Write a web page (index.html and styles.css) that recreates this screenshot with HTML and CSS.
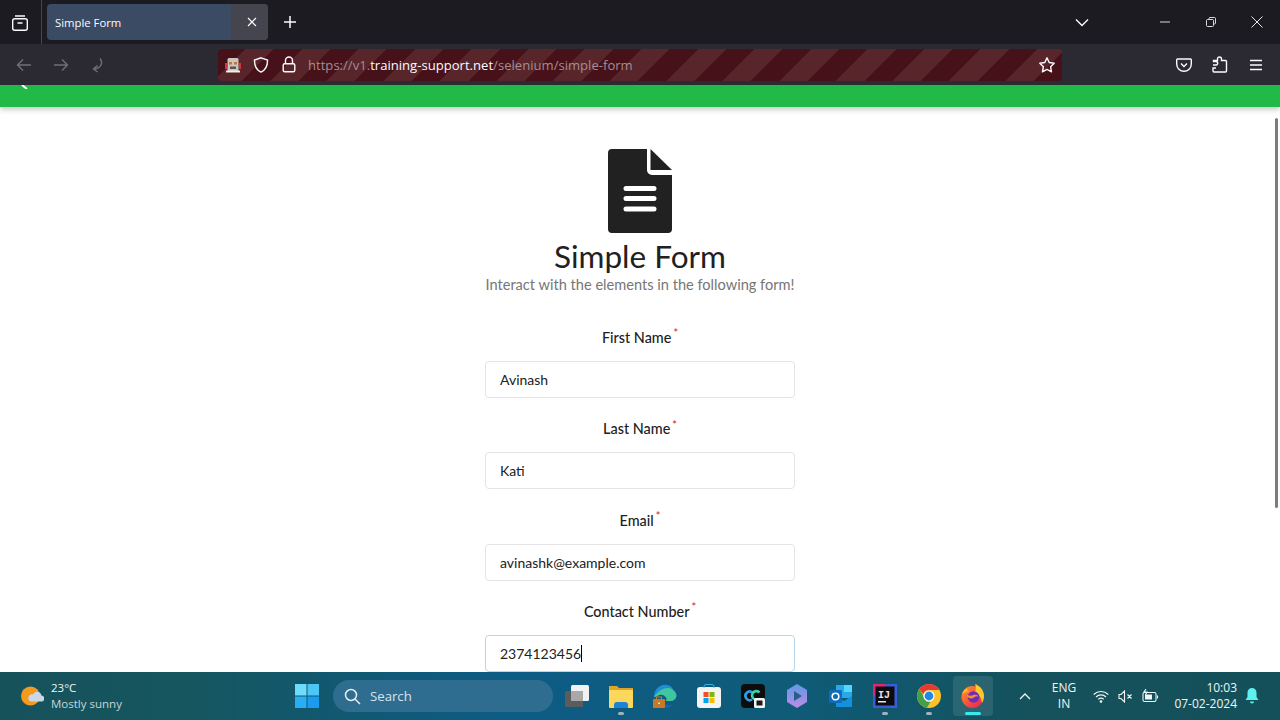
FILE: index.html
```html
<!DOCTYPE html>
<html lang="en">
<head>
  <meta charset="UTF-8">
  <title>Simple Form</title>
  <link rel="stylesheet" href="styles.css">
</head>
<body>
  <!-- browser tabs -->
  <div class="tabbar">
    <div class="tab-left">
      <svg class="ico" width="20" height="20" viewBox="0 0 20 20" fill="none" stroke="#fbfbfe" stroke-width="1.4"><rect x="2.700" y="5.700" width="14.600" height="11.600" rx="2"/><path d="M5 3h10M7.500 10h5"/></svg>
    </div>
    <div class="tab">
      <span class="tab-title">Simple Form</span>
      <span class="tab-close"><svg width="10" height="10" viewBox="0 0 10 10" stroke="#fbfbfe" stroke-width="1.2"><path d="M1 1l8 8M9 1l-8 8"/></svg></span>
    </div>
    <svg class="tab-plus" width="14" height="14" viewBox="0 0 14 14" stroke="#fbfbfe" stroke-width="1.5"><path d="M7 1v12M1 7h12"/></svg>
    <div class="tab-right">
      <svg class="tab-list" width="14" height="9" viewBox="0 0 14 9" fill="none" stroke="#fbfbfe" stroke-width="1.4"><path d="M1 1.500l6 6 6-6"/></svg>
      <div class="win-btn"><svg width="12" height="12" viewBox="0 0 12 12" stroke="#d8d8dc"><path d="M1 6h10"/></svg></div>
      <div class="win-btn"><svg width="12" height="12" viewBox="0 0 12 12" fill="none" stroke="#d8d8dc"><rect x="1.500" y="3.500" width="7" height="7" rx="1"/><path d="M4 3.500V2.500a1 1 0 0 1 1-1h4.500a1 1 0 0 1 1 1V7a1 1 0 0 1-1 1H8.500"/></svg></div>
      <div class="win-btn"><svg width="12" height="12" viewBox="0 0 12 12" stroke="#e8e8ea"><path d="M.5.500l11 11M11.500.500l-11 11"/></svg></div>
    </div>
  </div>

  <!-- address bar -->
  <div class="navbar">
    <div class="nav-btns">
      <svg width="16" height="14" viewBox="0 0 16 14" fill="none" stroke="#6f6f76" stroke-width="1.400"><path d="M15 7H1.500M7 1.500L1.500 7 7 12.500"/></svg>
      <svg width="16" height="14" viewBox="0 0 16 14" fill="none" stroke="#6f6f76" stroke-width="1.400"><path d="M1 7h13.500M9 1.500L14.500 7 9 12.500"/></svg>
      <svg width="14" height="16" viewBox="0 0 14 16" fill="none" stroke="#6f6f76" stroke-width="1.400"><path d="M10 1.500c3 3.500 2 9.500-6 10.500M7.500 8.500L3.500 12l4 3"/></svg>
    </div>
    <div class="urlbar">
      <svg class="url-robot" width="16" height="16" viewBox="0 0 16 16"><rect x="0" y="6" width="2" height="6" fill="#d0353f"/><rect x="14" y="6" width="2" height="6" fill="#d0353f"/><path d="M2.500 2.500Q2.500 1 4 1h8q1.500 0 1.500 1.500V14h-11z" fill="#c9c6c0"/><rect x="4" y="5" width="3" height="2.500" fill="#d0722c"/><rect x="9" y="5" width="3" height="2.500" fill="#d0722c"/><rect x="5" y="9.500" width="6" height="2.500" fill="#5a5654"/><rect x="1" y="13.500" width="14" height="2" rx=".5" fill="#f0eee8"/></svg>
      <svg width="18" height="18" viewBox="0 0 18 18" fill="none" stroke="#fbfbfe" stroke-width="1.400"><path d="M9 1.800l6.500 2.200c.2 5.500-1.500 9.800-6.500 12.200C4 13.800 2.300 9.500 2.500 4z"/></svg>
      <svg class="url-lock" width="14" height="17" viewBox="0 0 14 17" fill="none" stroke="#fbfbfe" stroke-width="1.400"><rect x="1.200" y="7.700" width="11.600" height="8" rx="1.500"/><path d="M3.500 7.500V4.500a3.500 3.500 0 0 1 7 0v3"/></svg>
      <span class="url-text">https://v1.<b>training-support.net</b>/selenium/simple-form</span>
      <svg class="url-star" width="18" height="18" viewBox="0 0 18 18" fill="none" stroke="#fbfbfe" stroke-width="1.400" stroke-linejoin="round"><path d="M9 1.800l2.200 4.700 5 .7-3.600 3.500.9 5.100L9 13.400l-4.500 2.400.9-5.100L1.800 7.200l5-.7z"/></svg>
    </div>
    <div class="nav-right">
      <svg width="16" height="14" viewBox="0 0 16 14" fill="none" stroke="#fbfbfe" stroke-width="1.400"><path d="M1.500 1h13a.8.8 0 0 1 .8.800V6a7.300 7.300 0 0 1-14.600 0V1.800a.8.8 0 0 1 .8-.8z"/><path d="M5 5.500l3 3 3-3"/></svg>
      <svg width="16" height="17" viewBox="0 0 16 17" fill="none" stroke="#fbfbfe" stroke-width="1.400"><path d="M1 9h2.500a1.800 1.800 0 1 0 0-3.500H1.500V4.500h4V3a2 2 0 0 1 4 0v1.500h4a1 1 0 0 1 1 1V15a1 1 0 0 1-1 1H2a1 1 0 0 1-1-1v-3h3"/></svg>
      <svg width="16" height="12" viewBox="-1 0 16 12" stroke="#fbfbfe" stroke-width="1.400"><path d="M1 1.500h12M1 6h12M1 10.500h12"/></svg>
    </div>
  </div>

  <!-- the page itself -->
  <div class="viewport">
    <div class="green-band">
      <svg class="band-tick" width="8" height="4" viewBox="0 0 8 4" stroke="#fff" stroke-width="2"><path d="M1 0l5 4"/></svg>
    </div>
    <div class="page">
      <svg class="doc-icon" width="64" height="84" viewBox="0 0 64 84"><path fill="#212121" fill-rule="evenodd" d="M4 0h35v21a5 5 0 0 0 5 5h20v54a4 4 0 0 1-4 4H4a4 4 0 0 1-4-4V4a4 4 0 0 1 4-4zM18 37a2.500 2.500 0 0 0 0 5h28a2.500 2.500 0 0 0 0-5zm0 10a2.500 2.500 0 0 0 0 5h28a2.500 2.500 0 0 0 0-5zm0 10.500a2.500 2.500 0 0 0 0 5h28a2.500 2.500 0 0 0 0-5z"/><path fill="#212121" d="M42.500 0L64 21H42.500z"/></svg>
      <h1 class="title">Simple Form</h1>
      <p class="subtitle">Interact with the elements in the following form!</p>
      <form class="form">
        <div class="field">
          <label class="label">First Name<sup class="req">*</sup></label>
          <div class="input">Avinash</div>
        </div>
        <div class="field">
          <label class="label">Last Name<sup class="req">*</sup></label>
          <div class="input">Kati</div>
        </div>
        <div class="field">
          <label class="label">Email<sup class="req">*</sup></label>
          <div class="input">avinashk@example.com</div>
        </div>
        <div class="field">
          <label class="label">Contact Number<sup class="req">*</sup></label>
          <div class="input focused">2374123456<span class="caret"></span></div>
        </div>
      </form>
    </div>
    <div class="scrollthumb"></div>
  </div>

  <!-- windows taskbar -->
  <div class="taskbar">
    <div class="weather">
      <svg width="24" height="24" viewBox="0 0 24 24"><circle cx="10.500" cy="12" r="9.500" fill="#f39a1e"/><path d="M11 17.500h10a3 3 0 0 0 .5-6 4.500 4.500 0 0 0-8.500-1 3.500 3.500 0 0 0-2 7z" fill="#c9d7ea"/></svg>
      <div class="weather-text">
        <span class="temp">23°C</span>
        <span class="sky">Mostly sunny</span>
      </div>
    </div>
    <div class="task-center">
      <svg class="start" width="24" height="24" viewBox="0 0 24 24"><rect width="11.500" height="11.500" fill="#6fdcfb"/><rect x="12.500" width="11.500" height="11.500" fill="#4cc5f7"/><rect y="12.500" width="11.500" height="11.500" fill="#29aef5"/><rect x="12.500" y="12.500" width="11.500" height="11.500" fill="#1a9bf0"/></svg>
      <div class="search">
        <svg width="17" height="17" viewBox="0 0 17 17" fill="none" stroke="#e8eef2" stroke-width="1.500"><circle cx="7" cy="7" r="5.500"/><path d="M11 11l5 5"/></svg>
        <span>Search</span>
      </div>
      <div class="apps">
        <div class="app"><svg width="24" height="24" viewBox="0 0 24 24"><rect x="0" y="7" width="18" height="16" rx="1.500" fill="#5c5c5c"/><rect x="6" y="1" width="18" height="16" rx="1.500" fill="#f2f2f2"/><rect x="6" y="7" width="12" height="10" fill="#a9a9a9"/></svg></div>
        <div class="app"><svg width="24" height="24" viewBox="0 0 24 24"><path d="M0 2h8l2 2h14v4H0z" fill="#e0a526"/><rect y="6" width="24" height="18" rx="1" fill="#fbd75b"/><path d="M5 24v-3a3 3 0 0 1 3-3h8a3 3 0 0 1 3 3v3z" fill="#1c84d8"/></svg><i class="dot"></i></div>
        <div class="app"><svg width="24" height="24" viewBox="0 0 24 24"><path d="M1 13A11.500 11.500 0 0 1 23.500 11c0 4-3 6-6 6h-5c1-1 1-2 1-3-2-3-5-4-7-3-3 1-5 3-5.500 2z" fill="#3fc6a0"/><path d="M1 13C1 6 6 1 12 .8 16 .7 19 3 20 5c-4-2-9-1-12 1-3 2-6 5-7 7z" fill="#1c8fd8"/><path d="M4 17c1 5 6 7 9 7 3 0 5-1 7-3-4 1-8 0-10-4z" fill="#1464b4"/><rect x="0" y="15" width="12" height="9" rx="1" fill="#c47a28"/><rect x="3.500" y="13" width="5" height="2.500" fill="none" stroke="#c47a28"/><rect x="5" y="18.500" width="2" height="1.500" fill="#f3d27a"/></svg></div>
        <div class="app"><svg width="24" height="24" viewBox="0 0 24 24"><rect y="3" width="24" height="21" rx="3" fill="#f4f4f4"/><path d="M7 4V2.500a2 2 0 0 1 2-2h6a2 2 0 0 1 2 2V4" fill="none" stroke="#35b8e8"/><rect x="6.500" y="8" width="5" height="5" fill="#f25022"/><rect x="12.500" y="8" width="5" height="5" fill="#7fba00"/><rect x="6.500" y="14" width="5" height="5" fill="#00a4ef"/><rect x="12.500" y="14" width="5" height="5" fill="#ffb900"/></svg></div>
        <div class="app"><svg width="24" height="24" viewBox="0 0 24 24"><rect width="24" height="24" rx="4" fill="#0d0d0d"/><path d="M11.500 8.500A4.300 4.300 0 1 0 11 15.500" fill="none" stroke="#2a9fe6" stroke-width="2.600"/><path d="M18.500 8.500A4.300 4.300 0 1 0 14 15.500" fill="none" stroke="#3bd0b0" stroke-width="2.600"/><rect x="13" y="14" width="11" height="10" rx="1.500" fill="#f4f4f4"/><rect x="15.500" y="16.500" width="6" height="5" rx=".5" fill="#1a1a1a"/></svg></div>
        <div class="app"><svg width="24" height="24" viewBox="0 0 24 24"><defs><linearGradient id="cop" x1="0" y1="0" x2="0" y2="1"><stop offset="0" stop-color="#5a9be8"/><stop offset="1" stop-color="#c08ae6"/></linearGradient></defs><path d="M12 0l10 6v12l-10 6L2 18V6z" fill="url(#cop)"/><path d="M9 7l8 5-8 5z" fill="#275f8a"/></svg></div>
        <div class="app"><svg width="24" height="24" viewBox="0 0 24 24"><rect x="7" y="1" width="16" height="13" fill="#28a8ea"/><rect x="15" y="1" width="8" height="7" fill="#50d9ff"/><path d="M7 12l8 5 8-5v11H7z" fill="#1490df"/><rect y="6" width="13" height="13" rx="1.500" fill="#0f6cbd"/><circle cx="6.500" cy="12.500" r="3.300" fill="none" stroke="#fff" stroke-width="1.600"/></svg></div>
        <div class="app"><svg width="24" height="24" viewBox="0 0 24 24"><rect width="24" height="24" fill="#3b5cd6"/><rect x="0" y="0" width="12" height="12" fill="#e0286e"/><rect x="2.500" y="2.500" width="19" height="19" fill="#0c0c10"/><text x="5" y="13.500" class="ij">IJ</text><rect x="5" y="17" width="8" height="1.500" fill="#e8e8e8"/></svg><i class="dot"></i></div>
        <div class="app"><svg width="24" height="24" viewBox="0 0 24 24"><circle cx="12" cy="12" r="12" fill="#fbc02d"/><path d="M12 0a12 12 0 0 1 10.400 6H12a6 6 0 0 0-5.700 4.200L2.300 5A12 12 0 0 1 12 0z" fill="#e53935"/><path d="M2.300 5l5 8.500a5.500 5.500 0 0 0 6 4.500l-3.400 5.800A12 12 0 0 1 2.300 5z" fill="#43a047"/><circle cx="12" cy="12" r="5.600" fill="#fff"/><circle cx="12" cy="12" r="4.400" fill="#1e88e5"/></svg><i class="dot"></i></div>
        <div class="app active"><svg width="24" height="24" viewBox="0 0 24 24"><defs><linearGradient id="fox" x1="0" y1="0" x2="1" y2="1"><stop offset="0" stop-color="#ff9a2a"/><stop offset=".6" stop-color="#f5483c"/><stop offset="1" stop-color="#e5206a"/></linearGradient></defs><circle cx="11.500" cy="13" r="11" fill="url(#fox)"/><path d="M14 0c5 2 9 6 9 12 0 3-1 5-2 7-1-6-3-9-7-11 1-3 1-6 0-8z" fill="#ffc928"/><path d="M1 10c1-3 3-5 5-6 0 2 1 3 3 3-3 1-6 2-8 3z" fill="#ffb52e"/><circle cx="12.500" cy="13" r="5.800" fill="#6a2fb8"/><path d="M5.500 10.500c2 1.500 5 1.500 7 .5 2-.5 4 0 5 1.500-1-.5-3-.5-4 .5-1 1.500-4 2-6 .5-1-.5-2-1.500-2-3z" fill="#ff8a2a"/></svg><i class="bar"></i></div>
      </div>
    </div>
    <div class="tray">
      <svg class="tray-up" width="12" height="7" viewBox="0 0 12 7" fill="none" stroke="#f1f5f7" stroke-width="1.300"><path d="M1 6l5-5 5 5"/></svg>
      <div class="lang"><span>ENG</span><span>IN</span></div>
      <div class="tray-icons">
        <svg width="16" height="13" viewBox="0 0 16 13" fill="none" stroke="#f1f5f7" stroke-width="1.100"><path d="M.7 4.500a10.500 10.500 0 0 1 14.600 0M3 7a7 7 0 0 1 10 0M5.300 9.300a3.700 3.700 0 0 1 5.400 0"/><circle cx="8" cy="11.500" r=".8" fill="#f1f5f7"/></svg>
        <svg width="15" height="13" viewBox="0 0 15 13" fill="none" stroke="#f1f5f7" stroke-width="1.100"><path d="M1 4.500h2L6.500 1v11L3 8.500H1zM9.500 4.500l4 4M13.500 4.500l-4 4"/></svg>
        <svg width="17" height="14" viewBox="0 0 17 14" fill="none" stroke="#f1f5f7" stroke-width="1.100"><rect x="1" y="3.500" width="13" height="9" rx="1.500"/><rect x="3" y="5.500" width="7" height="5" fill="#f1f5f7" stroke="none"/><path d="M15.500 6.500v3M4 0L2 3h3L3.500 6"/></svg>
      </div>
      <div class="clock"><span>10:03</span><span>07-02-2024</span></div>
      <svg class="bell" width="14" height="16" viewBox="0 0 14 16"><path d="M7 0a4.500 4.500 0 0 1 4.500 4.500V9l2 3H.5l2-3V4.500A4.500 4.500 0 0 1 7 0zM5 13.500h4a2 2 0 0 1-4 0z" fill="#5ff0f0"/></svg>
    </div>
  </div>
</body>
</html>
```

FILE: styles.css
```css
html, body {
  margin: 0;
  padding: 0;
  height: 100%;
}
body {
  width: 1280px;
  height: 720px;
  display: flex;
  flex-direction: column;
  overflow: hidden;
  background: #fff;
  font-family: "Open Sans", sans-serif;
}

/* tabs */
.tabbar {
  height: 44px;
  flex: none;
  display: flex;
  align-items: center;
  background: #1c1b22;
  color: #fbfbfe;
}
.tab-left {
  width: 42px;
  height: 44px;
  flex: none;
  display: flex;
  align-items: center;
  justify-content: center;
  padding: 1px 2px 0 0;
  box-sizing: border-box;
  border-right: 1px solid #45454c;
  margin-right: 5px;
}
.tab {
  width: 221px;
  height: 36px;
  display: flex;
  align-items: center;
  justify-content: space-between;
  background: #3b4b63;
  border-radius: 4px;
  overflow: hidden;
  font-size: 11.3px;
}
.tab-title {
  padding-left: 8px;
}
.tab-close {
  width: 37px;
  height: 36px;
  display: flex;
  align-items: center;
  justify-content: center;
  padding-left: 4px;
  box-sizing: border-box;
  background: #45454f;
}
.tab-plus {
  margin-left: 15px;
}
.tab-right {
  margin-left: auto;
  display: flex;
  align-items: center;
}
.tab-list {
  margin-right: 53px;
}
.win-btn {
  width: 46px;
  height: 44px;
  display: flex;
  align-items: center;
  justify-content: center;
}

/* address bar */
.navbar {
  height: 41px;
  flex: none;
  display: flex;
  align-items: center;
  background: #2b2a33;
}
.nav-btns {
  width: 218px;
  flex: none;
  display: flex;
  align-items: center;
  gap: 21px;
  padding-left: 16px;
  box-sizing: border-box;
}
.urlbar {
  width: 844px;
  height: 32px;
  flex: none;
  display: flex;
  align-items: center;
  gap: 11px;
  padding: 0 6px 0 7px;
  box-sizing: border-box;
  border-radius: 4px;
  background: repeating-linear-gradient(-45deg, #47111a 0 20px, #58252b 20px 40px);
  color: #a58d92;
  font-size: 13.1px;
}
.url-lock {
  margin-left: 1px;
}
.url-text {
  margin-left: 1px;
}
.url-text b {
  font-weight: 400;
  color: #fbfbfe;
}
.url-star {
  margin-left: auto;
}
.nav-right {
  flex: 1;
  display: flex;
  align-items: center;
  justify-content: flex-end;
  gap: 20px;
  padding-right: 16px;
}

/* page area */
.viewport {
  position: relative;
  flex: 1;
  min-height: 0;
  overflow: hidden;
  background: #fff;
}
.green-band {
  position: relative;
  height: 22px;
  background: #21ba48;
  box-shadow: 0 2px 6px rgba(0, 0, 0, 0.25);
}
.band-tick {
  position: absolute;
  left: 21px;
  top: 0;
}
.page {
  display: flex;
  flex-direction: column;
  align-items: center;
  padding-top: 42px;
}
.doc-icon {
  display: block;
}
.title {
  margin: 6px 0 0;
  font-family: Lato, sans-serif;
  font-size: 31.5px;
  line-height: 34px;
  font-weight: 400;
  color: #212121;
}
.subtitle {
  margin: 2px 0 0;
  font-family: Lato, sans-serif;
  font-size: 14.6px;
  line-height: 20px;
  color: #767676;
}
.form {
  width: 310px;
  margin-top: 25px;
  display: flex;
  flex-direction: column;
  gap: 13.3px;
}
.field {
  display: flex;
  flex-direction: column;
  align-items: center;
}
.label {
  height: 41px;
  line-height: 36px;
  font-family: Lato, sans-serif;
  font-size: 14.4px;
  font-weight: 500;
  color: #212121;
}
.req {
  color: #db2828;
  font-size: 11px;
  line-height: 0;
  margin-left: 2px;
}
.input {
  width: 100%;
  height: 37px;
  line-height: 35px;
  padding: 0 14px;
  box-sizing: border-box;
  border: 1px solid #e4e4e6;
  border-radius: 4px;
  font-family: Lato, sans-serif;
  font-size: 14px;
  color: #212121;
}
.input.focused {
  border-color: #b5d6ec;
}
.caret {
  display: inline-block;
  width: 1px;
  height: 17px;
  background: #000;
  vertical-align: -3px;
}
.scrollthumb {
  position: absolute;
  right: 2px;
  top: 33px;
  width: 3px;
  height: 390px;
  background: #7d7d7d;
  border-radius: 2px;
}

/* taskbar */
.taskbar {
  height: 48px;
  flex: none;
  display: flex;
  align-items: center;
  background: linear-gradient(90deg, #17525b 0%, #15565f 15%, #0d5c86 40%, #0f5b78 62%, #14525c 80%, #14505a 100%);
  color: #f1f5f7;
  font-size: 12px;
}
.weather {
  width: 295px;
  flex: none;
  display: flex;
  align-items: center;
  gap: 7px;
  padding-left: 20px;
  box-sizing: border-box;
}
.weather-text {
  display: flex;
  flex-direction: column;
  line-height: 16px;
}
.temp {
  font-size: 11.5px;
}
.sky {
  font-size: 11.5px;
  color: #c6d6da;
}
.task-center {
  display: flex;
  align-items: center;
}
.start {
  margin-right: 14px;
}
.search {
  width: 220px;
  height: 32px;
  display: flex;
  align-items: center;
  gap: 9px;
  padding-left: 11px;
  box-sizing: border-box;
  border-radius: 16px;
  background: #2f6d90;
  color: #d6e3ea;
  font-size: 13.200px;
}
.apps {
  display: flex;
  margin-left: 2px;
}
.app {
  position: relative;
  width: 40px;
  height: 40px;
  margin: 0 2px;
  display: flex;
  align-items: center;
  justify-content: center;
  border-radius: 4px;
}
.app.active {
  background: rgba(255, 255, 255, 0.1);
}
.dot {
  position: absolute;
  left: 17px;
  bottom: 1px;
  width: 6px;
  height: 3px;
  border-radius: 2px;
  background: #9fb4bd;
}
.bar {
  position: absolute;
  left: 12px;
  bottom: 1px;
  width: 16px;
  height: 3px;
  border-radius: 2px;
  background: #3ce8ee;
}
.ij {
  font-family: "Liberation Mono", monospace;
  font-size: 10px;
  font-weight: 700;
  fill: #e8e8e8;
}
.tray {
  margin-left: auto;
  display: flex;
  align-items: center;
  padding-right: 21px;
}
.tray-up {
  margin-right: 14px;
}
.lang {
  width: 38px;
  display: flex;
  flex-direction: column;
  align-items: center;
  line-height: 16px;
}
.tray-icons {
  display: flex;
  align-items: center;
  gap: 9px;
  margin-left: 10px;
}
.clock {
  width: 78px;
  display: flex;
  flex-direction: column;
  align-items: flex-end;
  line-height: 16px;
}
.bell {
  margin-left: 8px;
}
```
